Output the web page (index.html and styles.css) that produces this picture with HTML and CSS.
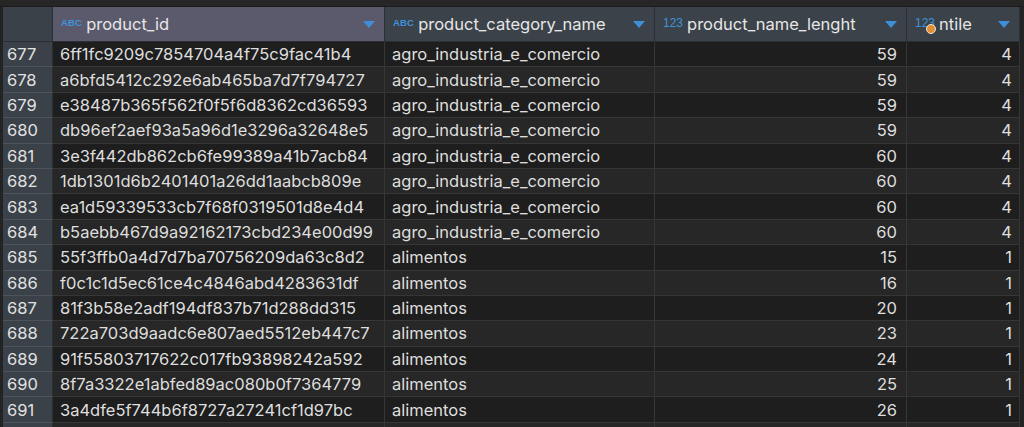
FILE: index.html
```html
<!DOCTYPE html>
<html>
<head>
<meta charset="utf-8">
<link rel="stylesheet" href="styles.css">
</head>
<body>
<div class="topbar"></div>
<div class="grid">
  <div class="hcell corner"></div>
  <div class="hcell sel"><span class="ic abc">ABC</span><span class="hname">product_id</span><svg class="tri" width="12" height="7" viewBox="0 0 12 7"><path d="M0 0H12L6 7Z"/></svg></div>
  <div class="hcell"><span class="ic abc">ABC</span><span class="hname">product_category_name</span><svg class="tri" width="12" height="7" viewBox="0 0 12 7"><path d="M0 0H12L6 7Z"/></svg></div>
  <div class="hcell"><span class="ic num">123</span><span class="hname">product_name_lenght</span><svg class="tri" width="12" height="7" viewBox="0 0 12 7"><path d="M0 0H12L6 7Z"/></svg></div>
  <div class="hcell"><span class="ic num dotwrap">123<span class="dot"></span></span><span class="hname">ntile</span><svg class="tri" width="12" height="7" viewBox="0 0 12 7"><path d="M0 0H12L6 7Z"/></svg></div>

  <div class="rn">677</div><div class="c">6ff1fc9209c7854704a4f75c9fac41b4</div><div class="c">agro_industria_e_comercio</div><div class="c r">59</div><div class="c r">4</div>
  <div class="rn">678</div><div class="c alt">a6bfd5412c292e6ab465ba7d7f794727</div><div class="c alt">agro_industria_e_comercio</div><div class="c alt r">59</div><div class="c alt r">4</div>
  <div class="rn">679</div><div class="c">e38487b365f562f0f5f6d8362cd36593</div><div class="c">agro_industria_e_comercio</div><div class="c r">59</div><div class="c r">4</div>
  <div class="rn">680</div><div class="c alt">db96ef2aef93a5a96d1e3296a32648e5</div><div class="c alt">agro_industria_e_comercio</div><div class="c alt r">59</div><div class="c alt r">4</div>
  <div class="rn">681</div><div class="c">3e3f442db862cb6fe99389a41b7acb84</div><div class="c">agro_industria_e_comercio</div><div class="c r">60</div><div class="c r">4</div>
  <div class="rn">682</div><div class="c alt">1db1301d6b2401401a26dd1aabcb809e</div><div class="c alt">agro_industria_e_comercio</div><div class="c alt r">60</div><div class="c alt r">4</div>
  <div class="rn">683</div><div class="c">ea1d59339533cb7f68f0319501d8e4d4</div><div class="c">agro_industria_e_comercio</div><div class="c r">60</div><div class="c r">4</div>
  <div class="rn">684</div><div class="c alt">b5aebb467d9a92162173cbd234e00d99</div><div class="c alt">agro_industria_e_comercio</div><div class="c alt r">60</div><div class="c alt r">4</div>
  <div class="rn">685</div><div class="c">55f3ffb0a4d7d7ba70756209da63c8d2</div><div class="c">alimentos</div><div class="c r">15</div><div class="c r">1</div>
  <div class="rn">686</div><div class="c alt">f0c1c1d5ec61ce4c4846abd4283631df</div><div class="c alt">alimentos</div><div class="c alt r">16</div><div class="c alt r">1</div>
  <div class="rn">687</div><div class="c">81f3b58e2adf194df837b71d288dd315</div><div class="c">alimentos</div><div class="c r">20</div><div class="c r">1</div>
  <div class="rn">688</div><div class="c alt">722a703d9aadc6e807aed5512eb447c7</div><div class="c alt">alimentos</div><div class="c alt r">23</div><div class="c alt r">1</div>
  <div class="rn">689</div><div class="c">91f55803717622c017fb93898242a592</div><div class="c">alimentos</div><div class="c r">24</div><div class="c r">1</div>
  <div class="rn">690</div><div class="c alt">8f7a3322e1abfed89ac080b0f7364779</div><div class="c alt">alimentos</div><div class="c alt r">25</div><div class="c alt r">1</div>
  <div class="rn">691</div><div class="c">3a4dfe5f744b6f8727a27241cf1d97bc</div><div class="c">alimentos</div><div class="c r">26</div><div class="c r">1</div>
  <div class="rn"></div><div class="c alt"></div><div class="c alt"></div><div class="c alt r"></div><div class="c alt r"></div>
</div>
</body>
</html>
```

FILE: styles.css
```css
html, body {
  margin: 0;
  padding: 0;
  background: #232323;
  overflow: hidden;
  height: 427px;
}
body {
  font-family: Inter, "Liberation Sans", sans-serif;
  color: #dcdcdc;
}
.topbar {
  height: 7px;
  background: #262626;
  border-bottom: 1px solid #1b1b1b;
  box-sizing: border-box;
}
.grid {
  display: grid;
  grid-template-columns: 50px 332px 270px 252px 113px;
  grid-template-rows: 35px;
  grid-auto-rows: 25.4px;
  margin-left: 3px;
}
.hcell {
  background: #3b424a;
  border-right: 1px solid #2a2f35;
  border-bottom: 1px solid #2a2f35;
  display: flex;
  align-items: center;
  padding: 0 9px 0 8px;
  box-sizing: border-box;
  font-size: 16.5px;
  color: #e6e6e6;
  position: relative;
}
.hcell.corner { background: #3a4149; }
.hcell.sel { background: #5b5a6c; }
.hname { flex: 1; margin-left: 4px; white-space: nowrap; }
.ic {
  color: #3f93dc;
  font-family: "Liberation Sans", sans-serif;
  font-weight: bold;
}
.ic.abc { font-size: 9.5px; letter-spacing: 0.2px; margin-top: -3px; }
.ic.num { font-size: 12px; font-weight: normal; margin-top: -3px; }
.dotwrap { position: relative; }
.dot {
  position: absolute;
  left: 11px;
  top: 8px;
  width: 8px;
  height: 8px;
  border-radius: 50%;
  background: #e38d36;
  border: 1px solid #f3e6d6;
}
.tri { fill: #3f8fd8; flex: none; margin-top: 1px; }
.rn {
  background: #3a4149;
  border-right: 1px solid #2a2f35;
  border-bottom: 1px solid #4c535b;
  box-sizing: border-box;
  display: flex;
  align-items: center;
  padding-left: 4px;
  font-size: 16.5px;
  color: #e2e2e2;
}
.c {
  background: #1e1e1e;
  border-right: 1px solid #363636;
  border-bottom: 1px solid #363636;
  box-sizing: border-box;
  display: flex;
  align-items: center;
  padding: 0 7px;
  font-size: 16.5px;
  white-space: nowrap;
  color: #dedede;
}
.c.alt { background: #272727; }
.c.r { justify-content: flex-end; }
.c.r:nth-child(5n+4) { padding-right: 9px; }
```
